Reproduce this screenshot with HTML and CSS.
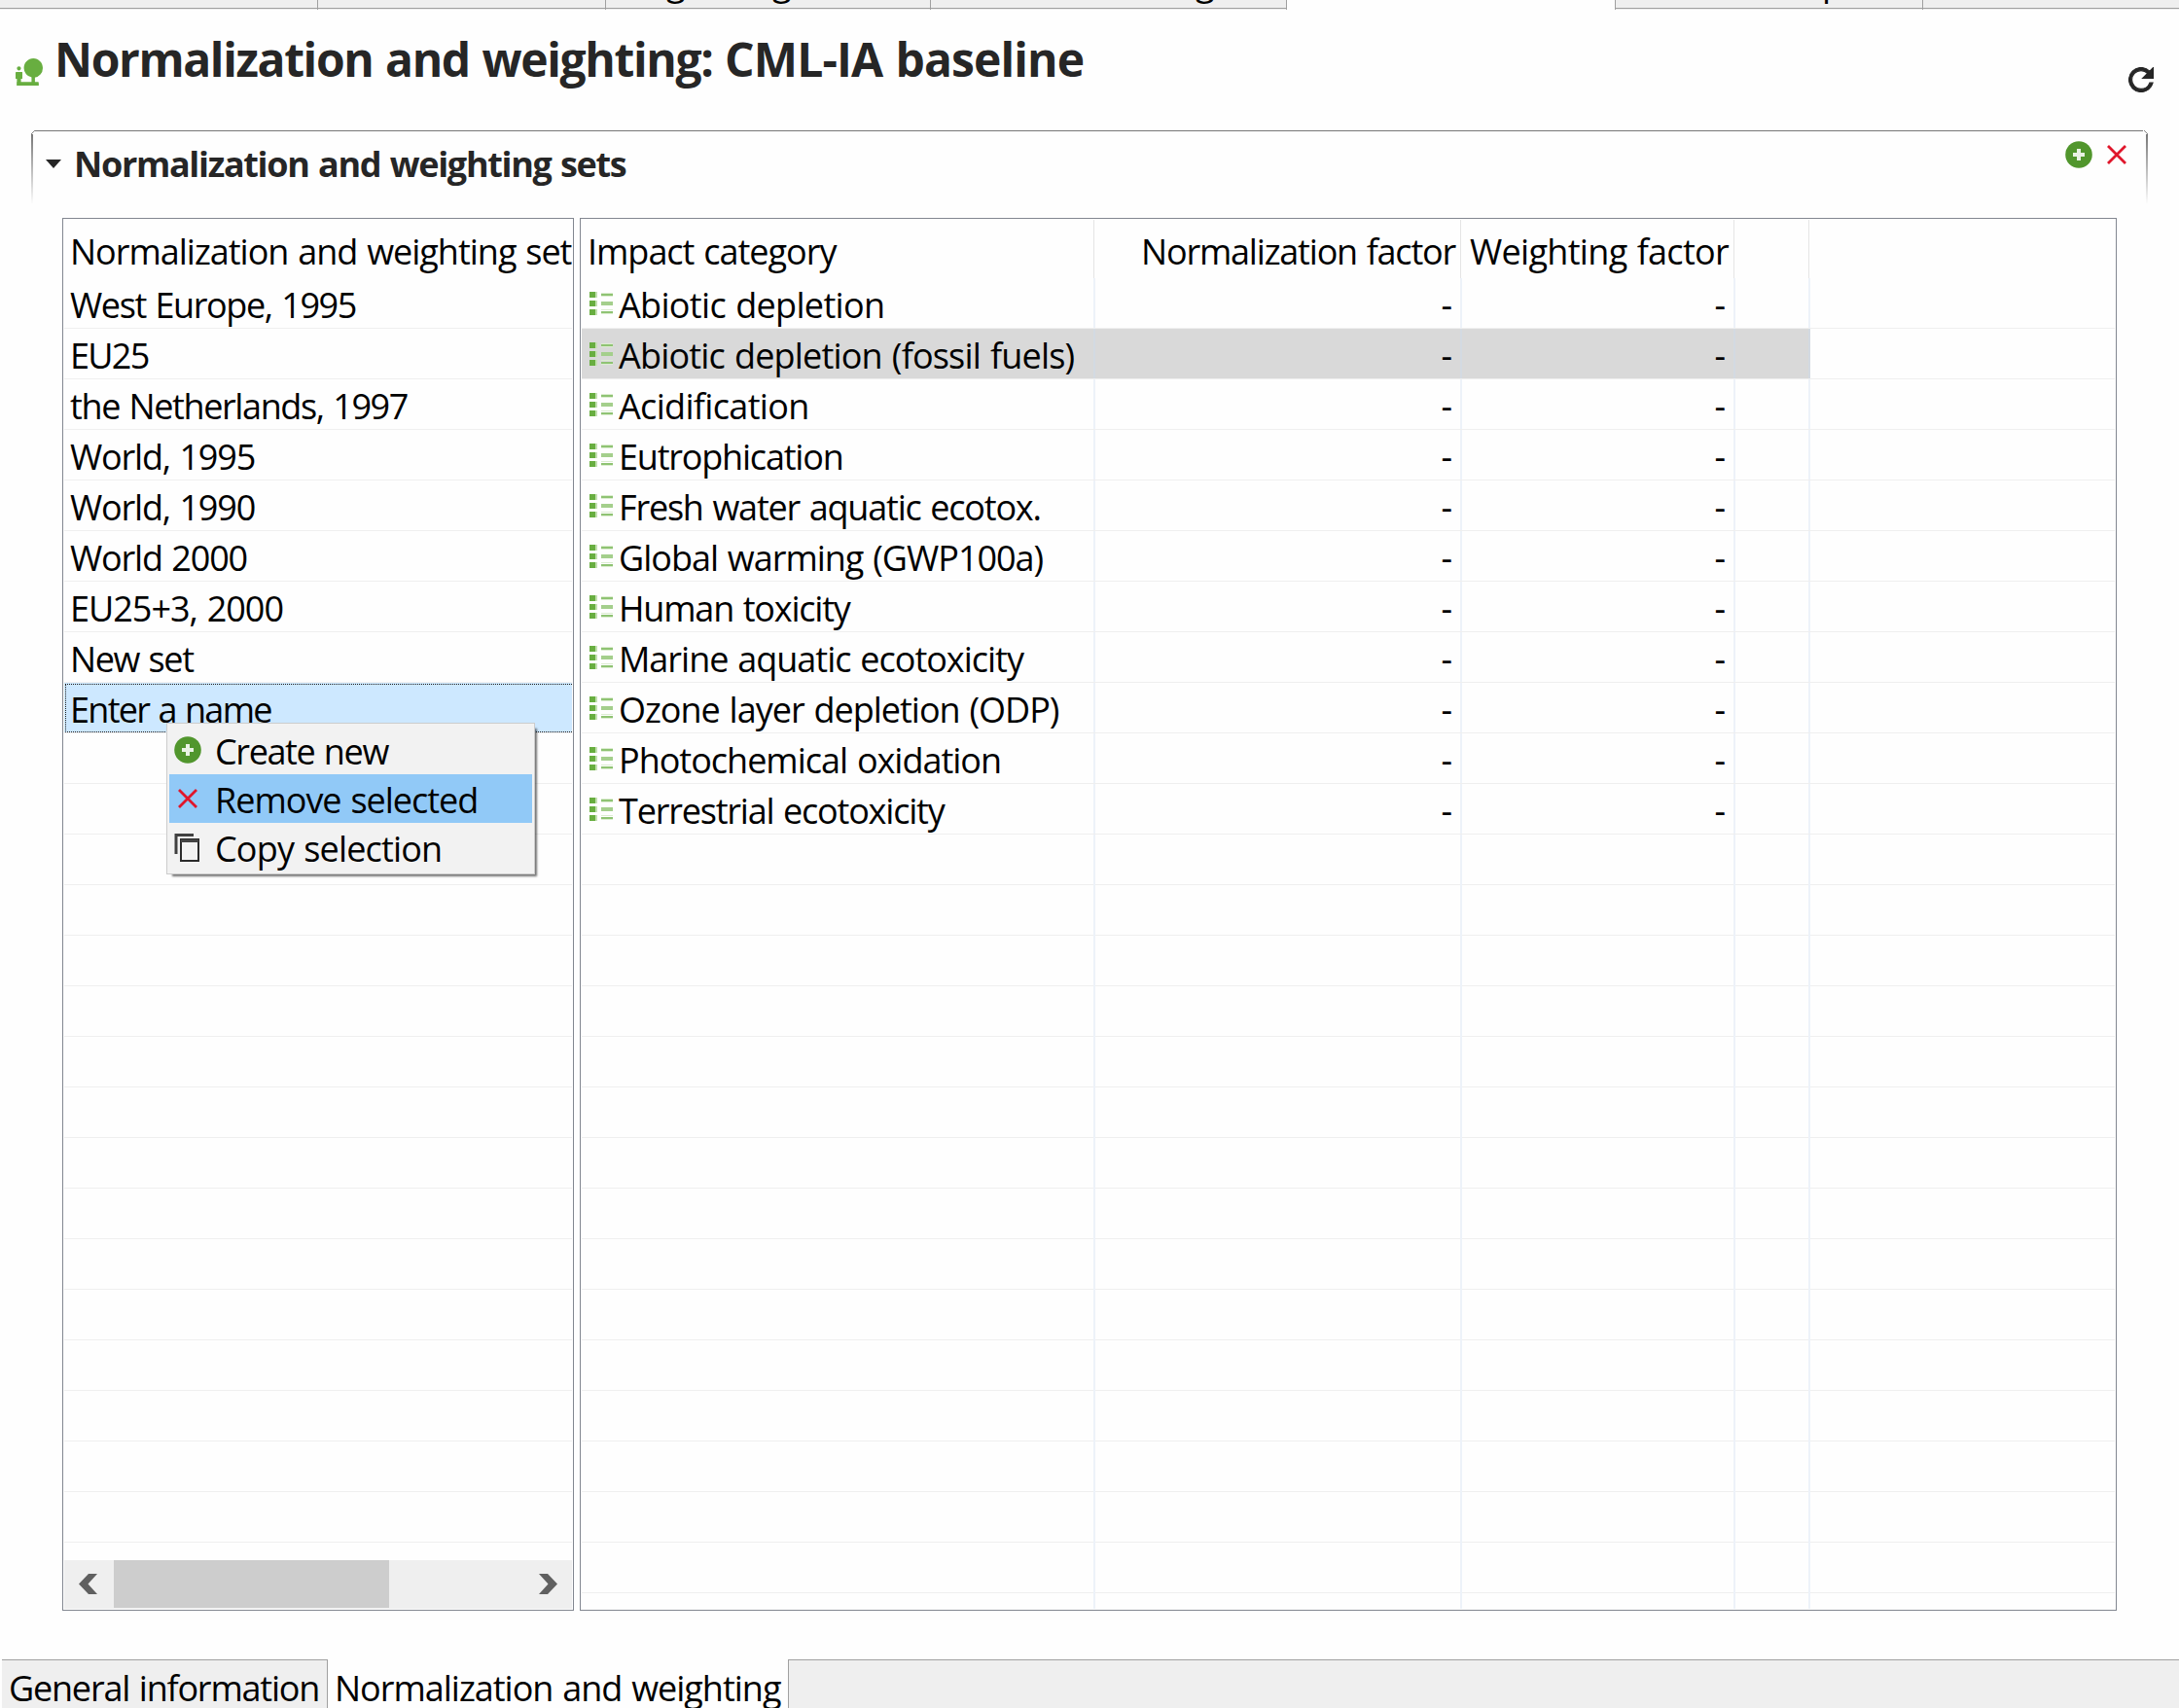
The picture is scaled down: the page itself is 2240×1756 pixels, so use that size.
FILE: index.html
```html
<!DOCTYPE html>
<html lang="en">
<head>
<meta charset="utf-8">
<title>Normalization and weighting: CML-IA baseline</title>
<link rel="stylesheet" href="styles.css">
</head>
<body>
<svg class="defs" aria-hidden="true">
  <symbol id="list" viewBox="0 0 24 24">
    <path fill="#68ae40" d="M0 0h6v6H0zM0 9h6v6H0zM0 18h6v6H0z"/>
    <path fill="#c3e0b1" d="M6 0h2v6H6zM6 9h2v6H6zM6 18h2v6H6z"/>
    <path fill="#dcedd1" d="M12 1h12v1H12zM12 4h12v1H12zM12 18h12v1H12zM12 22h12v1H12z"/>
    <path fill="#8fc373" d="M12 2h12v2H12zM12 20h12v2H12z"/>
    <path fill="#a4cf8c" d="M12 10h12v4H12z"/>
  </symbol>
  <symbol id="add" viewBox="0 0 28 28">
    <circle cx="14" cy="14" r="13.8" fill="#51962d"/>
    <path fill="#e9f2e4" d="M12 8h4v4h4v4h-4v4h-4v-4H8v-4h4z"/>
  </symbol>
  <symbol id="remove" viewBox="0 0 20 20">
    <path d="M1 1l18 18M19 1L1 19" stroke="#e0162b" stroke-width="2.8" fill="none"/>
  </symbol>
</svg>

<nav class="editor-tabs">
  <div class="etab e1"></div>
  <div class="etab e2"></div>
  <div class="etab e3"><span>g</span><span>g</span></div>
  <div class="etab e4"><span>g</span></div>
  <div class="etab active"></div>
  <div class="etab e6"><span>p</span></div>
  <div class="etab e7"></div>
</nav>

<header class="form-head">
  <svg class="tree" viewBox="2 2.17 20.17 19.83" preserveAspectRatio="none"><path fill="#68ae40" d="M22.17 9.17c0-3.87-3.13-7-7-7s-7 3.13-7 7A6.98 6.98 0 0 0 14 16.06V20H6v-3h1v-4c0-.55-.45-1-1-1H3c-.55 0-1 .45-1 1v4h1v5h16v-2h-3v-3.88a7 7 0 0 0 6.17-6.95zM4.5 11c.83 0 1.500-.67 1.500-1.500S5.330 8 4.500 8 3 8.670 3 9.500 3.670 11 4.500 11z"/><path fill="#68ae40" d="M2.300 12h4.700v5H2.300zM3 19.300h16V22H3zM14 15h2.300v5H14z"/></svg>
  <h1>Normalization and weighting: <span>CML-IA baseline</span></h1>
  <svg class="refresh" viewBox="3.7 3.7 16.6 16.6"><path fill="#262626" stroke="#262626" stroke-width=".7" d="M17.65 6.35C16.2 4.9 14.21 4 12 4c-4.42 0-7.99 3.58-7.99 8s3.57 8 7.99 8c3.73 0 6.84-2.55 7.73-6h-2.08c-.82 2.33-3.04 4-5.65 4-3.31 0-6-2.69-6-6s2.69-6 6-6c1.66 0 3.14.69 4.22 1.78L13 11h7V4l-2.35 2.35z"/></svg>
</header>

<section class="section">
  <div class="section-head">
    <svg class="twisty" viewBox="0 0 16 9"><path d="M0 0h16L8 9z" fill="#262626"/></svg>
    <h2>Normalization and weighting sets</h2>
    <svg class="tool-add"><use href="#add"/></svg>
    <svg class="tool-del"><use href="#remove"/></svg>
  </div>

  <div class="tables">
    <div class="panel sets">
      <div class="head c">Normalization and weighting set</div>
      <div class="row e">West Europe, 1995</div>
      <div class="row f">EU25</div>
      <div class="row e">the Netherlands, 1997</div>
      <div class="row d">World, 1995</div>
      <div class="row d">World, 1990</div>
      <div class="row d">World 2000</div>
      <div class="row c">EU25+3, 2000</div>
      <div class="row e">New set</div>
      <div class="row f picked">Enter a name
        <div class="menu">
          <div class="item e"><svg class="m-add"><use href="#add"/></svg>Create new</div>
          <div class="item c hot"><svg class="m-del"><use href="#remove"/></svg>Remove selected</div>
          <div class="item b"><svg class="m-copy" viewBox="0 0 26 30"><path d="M2 22V2.500H20" fill="none" stroke="#404040" stroke-width="3"/><path d="M7 7h18v22H7z" fill="none" stroke="#2b2b2b" stroke-width="2"/><path d="M7 7h18v3H7z" fill="#444"/></svg>Copy selection</div>
        </div>
      </div>
      <div class="filler"></div>
      <div class="hscroll">
        <svg class="arrow" viewBox="0 0 19 21"><path d="M10 0h9L9.500 10.500 19 21h-9L0 10.500z" fill="#606060"/></svg>
        <div class="thumb"></div>
        <svg class="arrow" viewBox="0 0 19 21"><path d="M9 0H0l9.500 10.500L0 21h9l10-10.500z" fill="#606060"/></svg>
      </div>
    </div>

    <div class="panel factors">
      <div class="grid ghead"><div class="c">Impact category</div><div class="d num">Normalization factor</div><div class="w num">Weighting factor</div><div></div><div></div></div>
      <div class="grid grow"><div class="a"><svg><use href="#list"/></svg>Abiotic depletion</div><div>-</div><div>-</div><div></div><div></div></div>
      <div class="grid grow dim"><div class="b"><svg><use href="#list"/></svg>Abiotic depletion (fossil fuels)</div><div>-</div><div>-</div><div></div><div></div></div>
      <div class="grid grow"><div class="a"><svg><use href="#list"/></svg>Acidification</div><div>-</div><div>-</div><div></div><div></div></div>
      <div class="grid grow"><div class="d"><svg><use href="#list"/></svg>Eutrophication</div><div>-</div><div>-</div><div></div><div></div></div>
      <div class="grid grow"><div class="d"><svg><use href="#list"/></svg>Fresh water aquatic ecotox.</div><div>-</div><div>-</div><div></div><div></div></div>
      <div class="grid grow"><div class="c"><svg><use href="#list"/></svg>Global warming (GWP100a)</div><div>-</div><div>-</div><div></div><div></div></div>
      <div class="grid grow"><div class="d"><svg><use href="#list"/></svg>Human toxicity</div><div>-</div><div>-</div><div></div><div></div></div>
      <div class="grid grow"><div class="c"><svg><use href="#list"/></svg>Marine aquatic ecotoxicity</div><div>-</div><div>-</div><div></div><div></div></div>
      <div class="grid grow"><div class="c"><svg><use href="#list"/></svg>Ozone layer depletion (ODP)</div><div>-</div><div>-</div><div></div><div></div></div>
      <div class="grid grow"><div class="c"><svg><use href="#list"/></svg>Photochemical oxidation</div><div>-</div><div>-</div><div></div><div></div></div>
      <div class="grid grow"><div class="d"><svg><use href="#list"/></svg>Terrestrial ecotoxicity</div><div>-</div><div>-</div><div></div><div></div></div>
      <div class="grid gfill"><div></div><div></div><div></div><div></div><div></div></div>
    </div>
  </div>
</section>

<nav class="page-tabs">
  <div class="ptab idle d">General information</div>
  <div class="ptab current c">Normalization and weighting</div>
  <div class="rest"></div>
</nav>
</body>
</html>
```
FILE: styles.css
```css
* { box-sizing: border-box; }
html, body { height: 100%; }
body {
  margin: 0;
  width: 2240px;
  height: 1756px;
  overflow: hidden;
  display: flex;
  flex-direction: column;
  background: #fefefe;
  color: #000;
  font: 36px "Open Sans", "Noto Sans", sans-serif;
  word-spacing: 1.5px;
  white-space: nowrap;
}
h1, h2 { margin: 0; font-weight: 700; color: #262626; }
svg { display: block; flex: none; }
.defs { position: absolute; width: 0; height: 0; }

/* letter fitting steps */
.w { letter-spacing: -0.7px; }
.a { letter-spacing: -0.67px; }
.b { letter-spacing: -0.82px; }
.c { letter-spacing: -1.01px; }
.d { letter-spacing: -1.2px; }
.e { letter-spacing: -1.38px; }
.f { letter-spacing: -1.7px; }

/* editor tabs */
.editor-tabs { display: flex; height: 10px; flex: none; }
.etab {
  height: 10px;
  overflow: hidden;
  display: flex;
  background: linear-gradient(#efefef 8px, #a0a0a0 8px, #a0a0a0 9px, #ededed 9px);
  border-right: 1px solid #a0a0a0;
}
.etab span { line-height: 36px; margin-top: -36px; width: 20px; height: 46px; flex: none; }
.e1 { width: 327px; }
.e2 { width: 296px; }
.e3 { width: 334px; padding-left: 62px; gap: 89px; }
.e4 { width: 366px; padding-left: 272px; }
.etab.active { width: 338px; background: none; }
.e6 { width: 316px; padding-left: 212px; }
.e7 { flex: 1; border-right: 0; }

/* form header */
.form-head { display: flex; align-items: flex-start; height: 124px; flex: none; padding: 19px 26px 0 16px; }
.form-head h1 { font-size: 48px; line-height: 63px; letter-spacing: -1.36px; margin-left: 12px; flex: 1; }
.form-head h1 span { letter-spacing: -0.87px; }
.tree { width: 28px; height: 28px; margin-top: 31px; }
.refresh { width: 26px; height: 26px; margin-top: 40px; }

/* section */
.section { flex: none; width: 2176px; margin-left: 32px; height: 1572px; }
.section-head {
  display: flex;
  align-items: flex-start;
  height: 90px;
  padding: 10px 20px 0 15px;
  background:
    linear-gradient(#777, #777) 4px 0 / 2167px 1px no-repeat,
    linear-gradient(135deg, transparent 46%, #888 46%, #888 60%, transparent 60%) 0 0 / 4px 4px no-repeat,
    linear-gradient(225deg, transparent 46%, #888 46%, #888 60%, transparent 60%) 100% 0 / 4px 4px no-repeat,
    linear-gradient(#777, #fefefe) 0 4px / 2px 72px no-repeat,
    linear-gradient(#777, #fefefe) 100% 4px / 2px 72px no-repeat;
}
.twisty { width: 16px; height: 9px; margin-top: 20px; }
h2 { font-size: 36px; line-height: 49px; letter-spacing: -1.33px; margin-left: 13px; flex: 1; }
.tool-add { width: 28px; height: 28px; margin: 1px 15px 0 0; }
.tool-del { width: 20px; height: 20px; margin: 5px 2px 0 0; }

.tables { display: flex; gap: 6px; margin-left: 32px; height: 1432px; }
.panel { border: 1px solid #828790; padding: 1px; background: #fefefe; display: flex; flex-direction: column; }
.sets { width: 526px; }
.factors { width: 1580px; }

.head { height: 60px; line-height: 65px; padding-left: 6px; overflow: hidden; flex: none; }
.row { position: relative; height: 52px; line-height: 56px; padding-left: 6px; border-bottom: 1px solid #efefef; flex: none; }
.picked { background: #cde8ff; }
.picked::after { content: ""; position: absolute; inset: 1px 0 0 1px; border: 1px dotted #222; border-right: 0; }
.filler { flex: 1; background: repeating-linear-gradient(transparent 0 51px, #efefef 51px 52px); }

.hscroll { display: flex; align-items: center; height: 50px; flex: none; background: #efefef; padding: 0 15px 1px 15px; }
.thumb { width: 283px; height: 49px; margin: 0 auto 0 17px; background: #cdcdcd; }
.arrow { width: 19px; height: 21px; }

/* context menu */
.menu {
  position: absolute;
  z-index: 2;
  left: 105px;
  top: 41px;
  width: 379px;
  height: 156px;
  padding: 2px;
  border: 1px solid #ccc;
  background: #f2f2f2;
  box-shadow: 4px 4px 2px -2px rgba(0, 0, 0, .55);
}
.item { display: flex; align-items: center; height: 50px; line-height: 50px; padding: 4px 0 0 5px; }
.item svg { margin: -4px 14px 0 0; }
.hot { background: #91c9f7; }
.m-add { width: 28px; height: 28px; }
.item .m-del { width: 20px; height: 20px; margin: -4px 18px 0 4px; }
.item .m-copy { width: 26px; height: 30px; margin-right: 16px; }

/* factor grid */
.grid { display: grid; grid-template-columns: 528px 377px 281px 77px 1fr; grid-template-rows: 100%; flex: none; }
.ghead { height: 60px; line-height: 65px; }
.ghead > div { padding: 0 5px 0 6px; border-right: 1px solid #e5e5e5; margin-right: 1px; }
.ghead > .num { text-align: right; padding-left: 0; }
.grow { height: 52px; line-height: 56px; border-bottom: 1px solid #efefef; }
.grow > div, .gfill > div { border-right: 2px solid #edf2f9; }
.grid > div:last-child { border-right: 0; }
.grow > div:first-child { display: flex; padding-left: 8px; }
.grow svg { width: 24px; height: 24px; margin: 14px 6px 0 0; }
.grow > div:nth-child(2), .grow > div:nth-child(3) { text-align: right; padding-right: 8px; }
.dim > div:not(:last-child) { background: #d9d9d9; border-right-color: #d3dae2; }
.grid.gfill { flex: 1; background: repeating-linear-gradient(transparent 0 51px, #efefef 51px 52px); }

/* page tabs */
.page-tabs { display: flex; height: 50px; flex: none; padding-left: 2px; }
.ptab { height: 50px; line-height: 58px; overflow: hidden; }
.idle { width: 335px; padding-left: 7px; background: #efefef; border-top: 1px solid #a0a0a0; border-right: 1px solid #a0a0a0; }
.current { width: 473px; padding: 1px 0 0 7px; }
.rest { flex: 1; background: #efefef; border-top: 1px solid #a0a0a0; border-left: 1px solid #a0a0a0; }
```
